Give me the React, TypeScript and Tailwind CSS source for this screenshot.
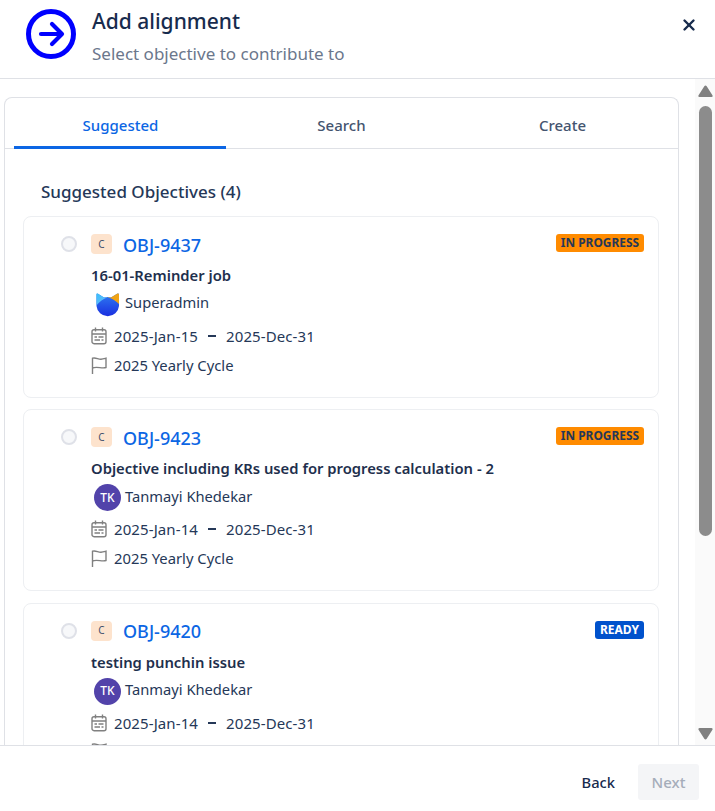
import React from "react";
import { X } from "lucide-react";

const objectives = [
  { key: "OBJ-9437", title: "16-01-Reminder job", owner: "Superadmin", start: "2025-Jan-15", status: "IN PROGRESS" },
  { key: "OBJ-9423", title: "Objective including KRs used for progress calculation - 2", owner: "Tanmayi Khedekar", start: "2025-Jan-14", status: "IN PROGRESS" },
  { key: "OBJ-9420", title: "testing punchin issue", owner: "Tanmayi Khedekar", start: "2025-Jan-14", status: "READY" },
];

const SuperadminLogo = () => (
  <svg width="27" height="27" viewBox="0 0 27 27">
    <defs>
      <linearGradient id="body" x1="0" y1="0" x2="0" y2="1">
        <stop offset="0" stopColor="#2f7cf2" />
        <stop offset="1" stopColor="#1a2fe0" />
      </linearGradient>
      <linearGradient id="ear" x1="0" y1="0" x2="1" y2="1">
        <stop offset="0" stopColor="#38c0fa" />
        <stop offset="1" stopColor="#6fb6fb" />
      </linearGradient>
    </defs>
    <path d="M2.5 3.5Q2.5 2 4 2.8L10 6.5Q14 5.5 17 6.5L23.5 2.5Q25 2 25 3.5V15A11.3 11.3 0 0 1 2.5 15Z" fill="url(#body)" />
    <path d="M2.5 3.5Q2.5 2 4 2.8L10 6.5Q12 6 13.5 6.2Q7 8.5 2.5 14.5Z" fill="url(#ear)" />
    <path d="M25 3.5Q25 2 23.5 2.5L17 6.5Q15 6 13.5 6.2Q20 8 25 13Z" fill="#f0a314" />
  </svg>
);

const CalendarIcon = () => (
  <svg width="16" height="18" viewBox="0 0 16 18" fill="none" stroke="#808080" strokeWidth="1.4">
    <rect x="1" y="2.7" width="14" height="14" rx="2" />
    <path d="M1 7h14M4.5 0.5v4M11.5 0.5v4M3.5 10h2.5M7.5 10h5M3.5 13h5.5M10.5 13h2" />
  </svg>
);

const FlagIcon = () => (
  <svg width="16" height="17" viewBox="0 0 16 17" fill="none" stroke="#808080" strokeWidth="1.4">
    <path d="M1.5 17V1.2C5 0.2 7 2.4 10 2.2C12 2.1 13.5 1.6 15 1.2V10.5C11 12 6 9 1.5 11" />
  </svg>
);

const Card = ({ item }: { item: (typeof objectives)[number] }) => (
  <div className="relative h-[182px] shrink-0 rounded-lg border border-[#edeff2] bg-white pt-[17px] pl-[37px]">
    <div className="flex h-[22px] items-center">
      <span className="h-4 w-4 -translate-y-px rounded-full border-2 border-[#dfe1e8] bg-[#f7f8fa]" />
      <span className="ml-[14px] flex h-5 w-[21px] -translate-y-px items-center justify-center rounded-sm bg-[#fde3cd] text-[10px] text-[#42526e]">C</span>
      <span className="ml-[11px] text-[18px] font-medium text-[#0c66e4]">{item.key}</span>
    </div>
    {item.status === "READY" ? (
      <span className="absolute top-[17px] right-[14px] flex h-[18px] items-center rounded-[3px] bg-[#0052cc] px-[5px] text-[12px] font-bold text-white">READY</span>
    ) : (
      <span className="absolute top-[17px] right-[14px] flex h-[18px] items-center rounded-[3px] bg-[#ff8b00] px-[5px] text-[11.9px] font-bold text-[#253858]">IN PROGRESS</span>
    )}
    <div className="mt-[9px] ml-[30px] text-[14.8px] leading-[20px] font-semibold text-[#1e2f4d]">{item.title}</div>
    <div className="mt-[6px] ml-[33px] flex h-[27px] items-center text-[14.7px] text-[#253858]">
      {item.owner === "Superadmin" ? (
        <SuperadminLogo />
      ) : (
        <span className="flex h-[27px] w-[27px] items-center justify-center rounded-full bg-[#5243aa] text-[12px] font-medium text-white">TK</span>
      )}
      <span className="ml-1 -translate-y-[2px]">{item.owner}</span>
    </div>
    <div className="mt-[6px] ml-[30px] flex h-6 items-center gap-[7px] text-[15px] tracking-[0.1px] text-[#253858]">
      <CalendarIcon />
      <span>{item.start}</span>
      <span className="mx-[3px] h-[2px] w-2 bg-[#253858]" />
      <span>2025-Dec-31</span>
    </div>
    <div className="mt-[5px] ml-[30px] flex h-6 items-center gap-[7px] text-[14.8px] text-[#253858]">
      <FlagIcon />
      <span>2025 Yearly Cycle</span>
    </div>
  </div>
);

export default function App() {
  return (
    <div className="flex h-[811px] w-[715px] flex-col overflow-hidden bg-white font-['Noto_Sans',sans-serif]">
      <header className="relative flex h-[79px] shrink-0 border-b border-[#dfe1e6] pt-[9px] pl-[26px]">
        <svg width="50" height="50" viewBox="0 0 50 50" fill="none" stroke="#0000ff" strokeLinecap="round" strokeLinejoin="round">
          <circle cx="25" cy="25" r="22.5" strokeWidth="5" />
          <path d="M15 25h20.5M26 15l10 10-10 10" strokeWidth="4.2" />
        </svg>
        <div className="ml-[16px] -mt-[2px]">
          <h1 className="text-[21px] leading-[28px] font-medium text-[#172b4d]">Add alignment</h1>
          <p className="mt-[7px] text-[17px] leading-[24px] text-[#6b778c]">Select objective to contribute to</p>
        </div>
        <X className="absolute top-[16px] right-[17px] h-[18px] w-[18px] text-[#172b4d]" strokeWidth={3.2} />
      </header>

      <div className="flex min-h-0 flex-1">
        <main className="min-h-0 w-[695px] shrink-0 overflow-hidden pt-[18px] pl-1">
          <div className="h-[700px] w-[675px] rounded-t-lg border border-b-0 border-[#dfe1e6]">
            <nav className="grid h-[51px] grid-cols-[221px_221px_221px] border-b border-[#dfe1e6] pl-[5px] text-[15px] font-medium text-[#44546f]">
              <div className="relative flex items-center justify-center pt-1 text-[#0c66e4]">
                Suggested
                <span className="absolute right-[5px] -bottom-px left-[4px] h-[3px] bg-[#0c66e4]" />
              </div>
              <div className="flex items-center justify-center pt-1">Search</div>
              <div className="flex items-center justify-center pt-1">Create</div>
            </nav>
            <h2 className="mt-[31px] ml-[36px] text-[17px] leading-[24px] font-medium text-[#253858]">Suggested Objectives (4)</h2>
            <div className="mt-[12px] ml-[18px] flex w-[636px] flex-col gap-[11.4px]">
              {objectives.map((o) => (
                <Card key={o.key} item={o} />
              ))}
            </div>
          </div>
        </main>
        <aside className="flex w-5 shrink-0 flex-col items-center bg-[#fafafa] pt-[6px] pl-[1px]">
          <svg width="15" height="12" viewBox="0 0 15 12" fill="#808080"><path d="M7.5 0.5Q8.2 0.5 8.7 1.3L14.6 10.5Q15 12 13.5 12H1.5Q0 12 0.4 10.5L6.3 1.3Q6.8 0.5 7.5 0.5z" /></svg>
          <div className="mt-[9px] h-[430px] w-[13px] rounded-full bg-[#8c8c8c]" />
          <svg className="mt-auto mb-[5px]" width="15" height="12" viewBox="0 0 15 12" fill="#808080"><path d="M7.5 11.5Q8.2 11.5 8.7 10.7L14.6 1.5Q15 0 13.5 0H1.5Q0 0 0.4 1.5L6.3 10.7Q6.8 11.5 7.5 11.5z" /></svg>
        </aside>
      </div>

      <footer className="flex h-[66px] shrink-0 items-start justify-end border-t border-[#dfe1e6] bg-white pt-[18px] pr-4">
        <button className="mr-[23px] h-9 text-[14.7px] font-medium text-[#172b4d]">Back</button>
        <button className="h-9 w-[61px] rounded-[3px] bg-[#f4f5f7] text-[15px] font-medium text-[#a5adba]">Next</button>
      </footer>
    </div>
  );
}
